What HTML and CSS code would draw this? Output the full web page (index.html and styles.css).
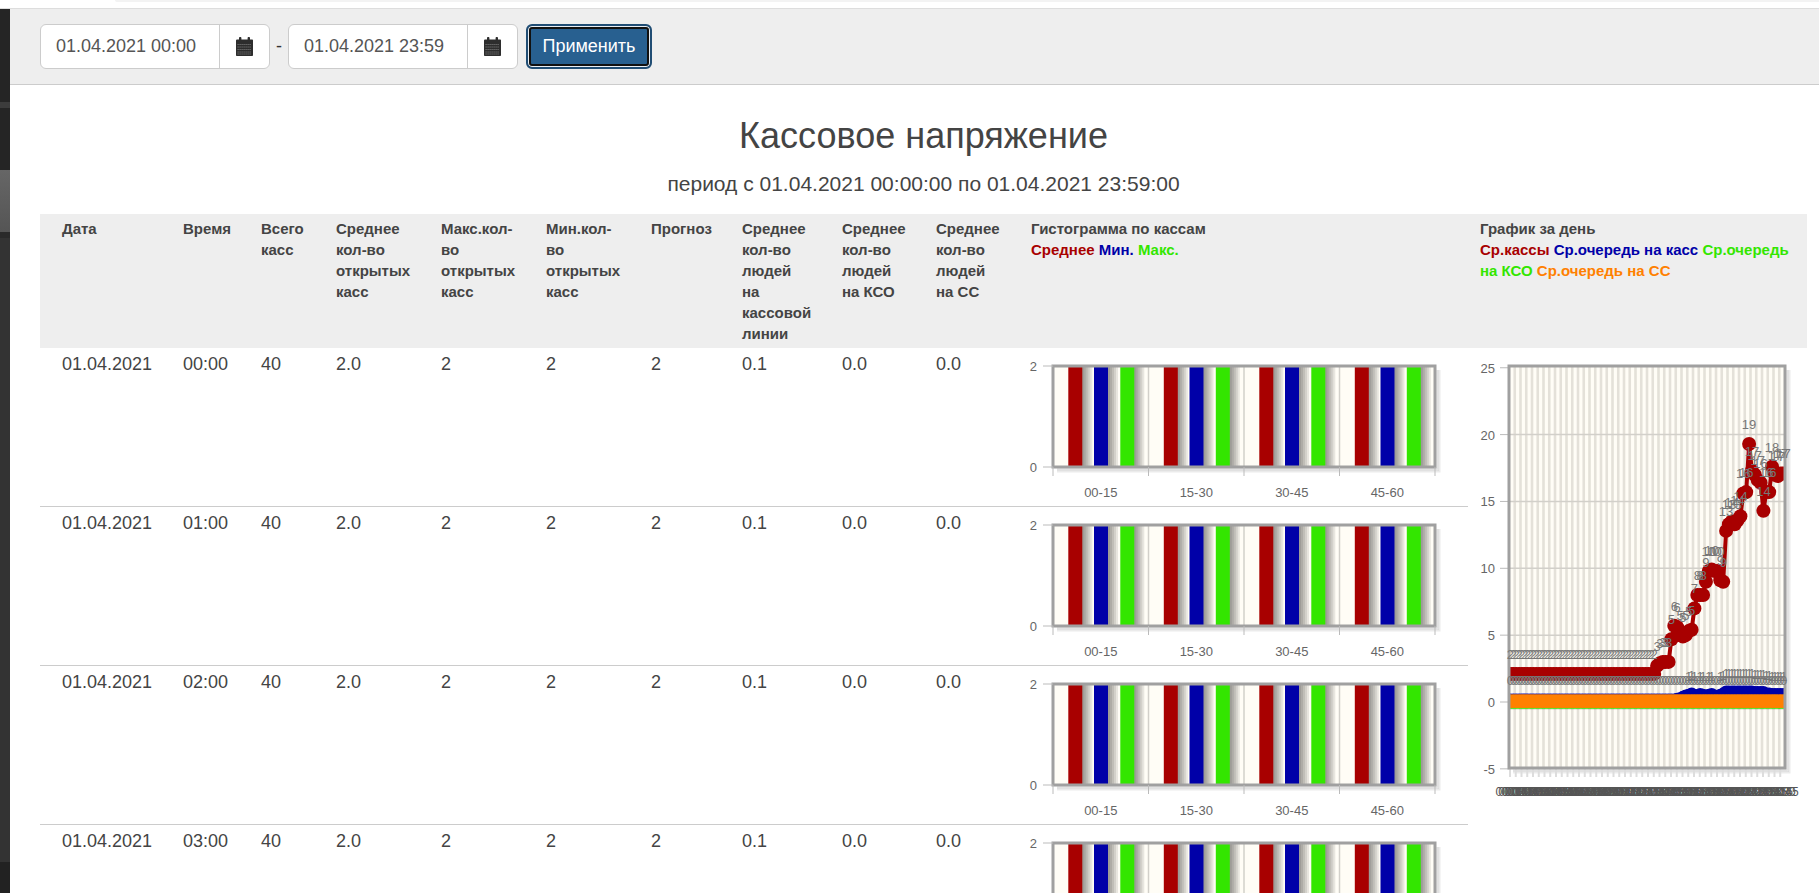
FILE: index.html
```html
<!DOCTYPE html>
<html lang="ru">
<head>
    <meta charset="UTF-8">
    <title>Кассовое напряжение</title>
    <link rel="stylesheet" href="styles.css">
</head>
<body>
    <div class="browser-strip"><div class="browser-tab"></div></div>
    <div class="app">
        <aside class="sidebar">
            <div class="seg seg-a"></div>
            <div class="seg seg-b"></div>
            <div class="seg seg-c"></div>
            <div class="seg seg-d"></div>
            <div class="seg seg-e"></div>
            <div class="seg seg-f"></div>
            <div class="seg seg-g"></div>
        </aside>
        <main class="main">
            <form class="toolbar">
                <div class="date-group">
                    <span class="date-value">01.04.2021 00:00</span>
                    <span class="date-addon">
                        <svg class="cal-icon" viewBox="0 0 17 19"><path d="M0 3.500C0 3 .4 2.600 1 2.600H3V1C3 .4 3.500 0 4.200 0s1.200.4 1.200 1v1.600h6.200V1c0-.6.5-1 1.200-1S14 .4 14 1v1.600h2c.6 0 1 .4 1 .9V18c0 .6-.4 1-1 1H1c-.6 0-1-.4-1-1z"/><path class="cal-grid" d="M1.500 7.500h14M1.500 10h14M1.500 12.500h14M1.500 15h14M1.500 17h14" /></svg>
                    </span>
                </div>
                <span class="date-dash">-</span>
                <div class="date-group">
                    <span class="date-value">01.04.2021 23:59</span>
                    <span class="date-addon">
                        <svg class="cal-icon" viewBox="0 0 17 19"><path d="M0 3.500C0 3 .4 2.600 1 2.600H3V1C3 .4 3.500 0 4.200 0s1.200.4 1.200 1v1.600h6.200V1c0-.6.5-1 1.200-1S14 .4 14 1v1.600h2c.6 0 1 .4 1 .9V18c0 .6-.4 1-1 1H1c-.6 0-1-.4-1-1z"/><path class="cal-grid" d="M1.500 7.500h14M1.500 10h14M1.500 12.500h14M1.500 15h14M1.500 17h14" /></svg>
                    </span>
                </div>
                <button type="button" class="apply-btn">Применить</button>
            </form>
            <div class="content">
                <h1>Кассовое напряжение</h1>
                <p class="period">период с 01.04.2021 00:00:00 по 01.04.2021 23:59:00</p>
                <table class="report">
                    <colgroup>
                        <col class="c-date"><col class="c-time"><col class="c-total"><col class="c-open"><col class="c-max"><col class="c-min"><col class="c-plan"><col class="c-line"><col class="c-kso"><col class="c-ss"><col class="c-hist"><col class="c-day">
                    </colgroup>
                    <thead>
                        <tr>
                            <th>Дата</th>
                            <th>Время</th>
                            <th>Всего касс</th>
                            <th>Среднее кол-во открытых касс</th>
                            <th>Макс.кол-во открытых касс</th>
                            <th>Мин.кол-во открытых касс</th>
                            <th>Прогноз</th>
                            <th>Среднее кол-во людей на кассовой линии</th>
                            <th>Среднее кол-во людей на КСО</th>
                            <th>Среднее кол-во людей на СС</th>
                            <th>Гистограмма по кассам<br><span class="red">Среднее</span> <span class="blue">Мин.</span> <span class="green">Макс.</span></th>
                            <th class="day-head">График за день<br><span class="red">Ср.кассы</span> <span class="blue">Ср.очередь на касс</span> <span class="green">Ср.очередь на КСО</span> <span class="orange">Ср.очередь на СС</span></th>
                        </tr>
                    </thead>
                    <tbody>
                        <tr>
                            <td>01.04.2021</td><td>00:00</td><td>40</td><td>2.0</td><td>2</td><td>2</td><td>2</td><td>0.1</td><td>0.0</td><td>0.0</td>
                            <td class="chart-cell"><div class="bar-chart"></div></td>
                            <td class="chart-cell day-cell" rowspan="4"><div id="day-chart"></div></td>
                        </tr>
                        <tr>
                            <td>01.04.2021</td><td>01:00</td><td>40</td><td>2.0</td><td>2</td><td>2</td><td>2</td><td>0.1</td><td>0.0</td><td>0.0</td>
                            <td class="chart-cell"><div class="bar-chart"></div></td>
                        </tr>
                        <tr>
                            <td>01.04.2021</td><td>02:00</td><td>40</td><td>2.0</td><td>2</td><td>2</td><td>2</td><td>0.1</td><td>0.0</td><td>0.0</td>
                            <td class="chart-cell"><div class="bar-chart"></div></td>
                        </tr>
                        <tr>
                            <td>01.04.2021</td><td>03:00</td><td>40</td><td>2.0</td><td>2</td><td>2</td><td>2</td><td>0.1</td><td>0.0</td><td>0.0</td>
                            <td class="chart-cell"><div class="bar-chart"></div></td>
                        </tr>
                    </tbody>
                </table>
            </div>
        </main>
    </div>
    <script src="script.js"></script>
</body>
</html>
```

FILE: styles.css
```css
html, body { height: 100%; margin: 0; overflow: hidden; }
body { display: flex; flex-direction: column; font-family: "Liberation Sans", Arial, sans-serif; color: #444; background: #fff; }

.browser-strip { height: 8px; flex: none; border-bottom: 1px solid #ddd; }
.browser-tab { height: 2px; margin-left: 115px; background: #f3f3f3; border-bottom-left-radius: 3px; }

.app { display: flex; flex: 1; min-height: 0; }
.sidebar { width: 10px; flex: none; display: flex; flex-direction: column; }
.seg-a { height: 93px; background: #252525; }
.seg-b { height: 6px; background: #3c3c3c; }
.seg-c { height: 62px; background: #252525; }
.seg-d { height: 62px; background: linear-gradient(#666, #555); }
.seg-e { height: 6px; background: #2a2a2a; }
.seg-f { height: 624px; background: #333; }
.seg-g { flex: 1; background: #222; }

.main { flex: 1; min-width: 0; }

.toolbar { display: flex; align-items: center; height: 75px; padding-left: 30px; background: #eee; border-bottom: 1px solid #ccc; box-sizing: content-box; }
.date-group { display: flex; width: 230px; height: 45px; box-sizing: border-box; background: #fff; border: 1px solid #ccc; border-radius: 6px; }
.date-value { width: 179px; padding-left: 15px; box-sizing: border-box; font-size: 18px; line-height: 43px; color: #555; border-right: 1px solid #ccc; }
.date-addon { flex: 1; display: flex; align-items: center; justify-content: center; }
.cal-icon { width: 17px; height: 19px; fill: #2d2d2d; }
.cal-grid { stroke: #9a9a9a; stroke-width: .7; stroke-dasharray: 1.2 .8; fill: none; }
.date-dash { width: 18px; text-align: center; font-size: 18px; color: #333; }
.apply-btn { width: 126px; height: 45px; margin-left: 8px; padding: 0; font: 18px "Liberation Sans", Arial, sans-serif; color: #fff; background: #286090; border: 2px solid #204d74; border-radius: 6px; box-shadow: inset 0 0 0 1px #e8eef4, inset 0 0 0 3px #111; }

.content { padding: 0 12px 0 30px; }
h1 { margin: 31px 0 0; font-size: 36px; font-weight: 400; line-height: 40px; text-align: center; color: #444; }
.period { margin: 15px 0 0; font-size: 21px; line-height: 26px; text-align: center; color: #444; }

.report { width: 1767px; margin-top: 17px; table-layout: fixed; border-collapse: separate; border-spacing: 0; }
.c-date { width: 135px; }
.c-time { width: 78px; }
.c-total { width: 75px; }
.c-open, .c-max, .c-min { width: 105px; }
.c-plan { width: 91px; }
.c-line { width: 100px; }
.c-kso { width: 94px; }
.c-ss { width: 95px; }
.c-hist { width: 445px; }
.c-day { width: 339px; }

.report th { padding: 4px 22px 4px 8px; font-size: 15px; line-height: 21px; font-weight: 700; text-align: left; vertical-align: top; color: #444; background: #eee; }
.report th:first-child, .report td:first-child { padding-left: 22px; }
.report td { height: 159px; box-sizing: border-box; padding: 4px 8px; font-size: 18px; line-height: 24px; vertical-align: top; color: #444; border-bottom: 1px solid #ccc; }
.report .day-head { padding-left: 12px; padding-right: 12px; }
.report .chart-cell { padding: 0; }
.report .day-cell { border-bottom: 0; }
.red { color: #a80000; }
.blue { color: #0000a8; }
.green { color: #33e600; }
.orange { color: #ff8000; }

svg { display: block; }
svg text { font-family: "Liberation Sans", Arial, sans-serif; font-size: 13px; fill: #666; }
.plot-bg { fill: #fffdf6; }
.plot-border { fill: none; stroke: #a0a0a0; stroke-width: 3; }
.grid-line { stroke: #d2d0ca; stroke-width: 1.5; }
.stripe { stroke: #e4e1d9; stroke-width: 2.6; }
.tick { stroke: #bbb; stroke-width: 1; }
.tick-soft { stroke: #ddd; stroke-width: 2; }
.edge-shadow { stroke: #000; stroke-opacity: .08; stroke-width: 2; fill: none; }
.bar-shadow { fill: #000; fill-opacity: .09; }
svg .val-label { fill: #777; }
svg .time-label { font-size: 12px; fill: #555; }
```

FILE: script.js
```js
var svgNs = 'width="%W%" height="%H%" xmlns="http://www.w3.org/2000/svg"';

function openSvg(w, h) {
    return '<svg ' + svgNs.replace('%W%', w).replace('%H%', h) + '>';
}

function line(x1, y1, x2, y2, cls) {
    return '<line x1="' + x1 + '" y1="' + y1 + '" x2="' + x2 + '" y2="' + y2 + '" class="' + cls + '"/>';
}

function edgeShadow(left, top, right, bottom) {
    let out = "";
    for (let k = 1; k <= 3; k++) {
        out += '<path class="edge-shadow" d="M' + (right + k * 1.5) + ' ' + (top + 4) + 'V' + (bottom + k * 1.5) + 'H' + (left + 4) + '"/>';
    }
    return out;
}

// Histogram per register: three bars in each quarter of an hour
function barChart() {
    let left = 30, right = 412, top = 18, bottom = 119;
    let slot = (right - left) / 4;
    let colors = ["#a80000", "#0000a8", "#33e600"];
    let offsets = [15.3, 41, 67.3];
    let names = ["00-15", "15-30", "30-45", "45-60"];
    let svg = openSvg(445, 158);

    svg += edgeShadow(left, top, right, bottom);
    svg += '<rect class="plot-bg" x="' + left + '" y="' + top + '" width="' + (right - left) + '" height="' + (bottom - top) + '"/>';

    for (let i = 1; i < 4; i++) {
        svg += line(left + slot * i, top, left + slot * i, bottom, "grid-line");
    }
    for (let i = 0; i < 4; i++) {
        for (let b = 0; b < 3; b++) {
            let x = left + slot * i + offsets[b];
            for (let k = 1; k <= 5; k++) {
                svg += '<rect class="bar-shadow" x="' + (x + k * 2) + '" y="' + top + '" width="14" height="' + (bottom - top) + '"/>';
            }
        }
    }
    for (let i = 0; i < 4; i++) {
        for (let b = 0; b < 3; b++) {
            let x = left + slot * i + offsets[b];
            svg += '<rect fill="' + colors[b] + '" x="' + x + '" y="' + top + '" width="14" height="' + (bottom - top) + '"/>';
        }
    }
    svg += '<rect class="plot-border" x="' + left + '" y="' + top + '" width="' + (right - left) + '" height="' + (bottom - top) + '"/>';

    for (let i = 0; i <= 4; i++) {
        svg += line(left + slot * i, bottom, left + slot * i, bottom + 9, "tick");
    }
    svg += line(20, top, left, top, "tick") + line(20, bottom, left, bottom, "tick");
    svg += '<text x="14" y="' + (top + 5) + '" text-anchor="end">2</text>';
    svg += '<text x="14" y="' + (bottom + 5) + '" text-anchor="end">0</text>';

    for (let i = 0; i < 4; i++) {
        svg += '<text x="' + (left + slot * i + slot / 2) + '" y="148.5" text-anchor="middle">' + names[i] + '</text>';
    }
    return svg + '</svg>';
}

function fill(count, value) {
    let out = [];
    for (let i = 0; i < count; i++) out.push(value);
    return out;
}

function valueLabel(x, y, text) {
    return '<text class="val-label" x="' + x.toFixed(1) + '" y="' + y.toFixed(1) + '" text-anchor="middle">' + text + '</text>';
}

// Day chart: 96 points, one for each 15 minutes
function dayChart() {
    let left = 41, right = 317, top = 18, bottom = 420;
    let zero = 354, unit = 13.37;
    let step = (right - left) / 96;

    let cash = fill(51, 2.1).concat([2.7, 2.9, 3, 3, 3, 4.7, 5.7, 5.6, 5, 4.9, 5, 5.3, 5.4, 7, 8, 8, 8, 9, 9.8, 9.9, 9.8, 9.8, 9.1, 9,
        12.8, 13.3, 13.5, 13.3, 13.6, 13.9, 15.6, 15.7, 19.3, 17.3, 17, 16.6, 16.4, 14.3, 15.7, 15.7, 17.6, 17, 16.9, 17.1, 17.1]);
    let queue = fill(58, 0.16).concat([.2, .25, .35, .45, .5, .6, .5, .4, .55, .5, .4, .5, .55, .45, .35, .5, .6])
        .concat(fill(10, .75)).concat(fill(4, .7)).concat([.6, .6, .55, .55, .55, .55, .55]);
    let kso = fill(96, 0);
    let ss = fill(96, 0.06);

    function px(i) { return left + step * i + step / 2; }
    function py(v) { return zero - v * unit; }

    let svg = openSvg(339, 477);
    svg += '<defs><clipPath id="plot-clip"><rect x="' + left + '" y="' + top + '" width="' + (right - left) + '" height="' + (bottom - top) + '"/></clipPath></defs>';
    svg += edgeShadow(left, top, right, bottom);
    svg += '<rect class="plot-bg" x="' + left + '" y="' + top + '" width="' + (right - left) + '" height="' + (bottom - top) + '"/>';

    for (let i = 1; i < 48; i++) {
        svg += line(left + step * 2 * i, top, left + step * 2 * i, bottom, "stripe");
    }
    for (let v = -5; v <= 25; v += 5) {
        if (v > -5 && v < 25) svg += line(left, py(v), right, py(v), "grid-line");
        svg += line(left - 9, py(v), left, py(v), "tick");
        svg += '<text x="' + (left - 14) + '" y="' + (py(v) + 5) + '" text-anchor="end">' + v + '</text>';
    }
    for (let i = 0; i < 48; i++) {
        svg += line(left + step * 2 * i + 1, bottom, left + step * 2 * i + 1, bottom + 9, "tick-soft");
    }

    let series = [
        { data: cash, color: "#a80000", r: 7, w: 4 },
        { data: kso, color: "#33e600", r: 6.8, w: 4 },
        { data: queue, color: "#0000a8", r: 6.5, w: 4 },
        { data: ss, color: "#ff8000", r: 6.85, w: 4 }
    ];

    svg += '<g clip-path="url(#plot-clip)">';
    svg += line(left, py(0) + 7, right, py(0) + 7, "edge-shadow");
    series.forEach(function (s) {
        let points = s.data.map(function (v, i) { return px(i).toFixed(1) + ',' + py(v).toFixed(1); });
        svg += '<polyline fill="none" stroke="' + s.color + '" stroke-width="' + s.w + '" points="' + points.join(" ") + '"/>';
        s.data.forEach(function (v, i) {
            svg += '<circle fill="' + s.color + '" cx="' + px(i).toFixed(1) + '" cy="' + py(v).toFixed(1) + '" r="' + s.r + '"/>';
        });
    });
    svg += '</g>';

    svg += '<rect class="plot-border" x="' + left + '" y="' + top + '" width="' + (right - left) + '" height="' + (bottom - top) + '"/>';

    // the zero queues all sit on one row of labels, the ones stand just above it
    cash.forEach(function (v, i) {
        svg += valueLabel(px(i), py(v) - 15, Math.round(v));
    });
    ss.forEach(function (v, i) {
        svg += valueLabel(px(i), zero - 17, 0);
    });
    queue.forEach(function (v, i) {
        if (v >= .5) svg += valueLabel(px(i), py(v) - 14, 1);
    });

    for (let i = 0; i < 96; i++) {
        let h = Math.floor(i / 4), m = (i % 4) * 15;
        let name = (h < 10 ? "0" : "") + h + ":" + (m < 10 ? "0" : "") + m;
        svg += '<text class="time-label" x="' + px(i).toFixed(1) + '" y="448" text-anchor="middle">' + name + '</text>';
    }
    return svg + '</svg>';
}

document.querySelectorAll(".bar-chart").forEach(function (el) {
    el.innerHTML = barChart();
});
document.getElementById("day-chart").innerHTML = dayChart();
```
